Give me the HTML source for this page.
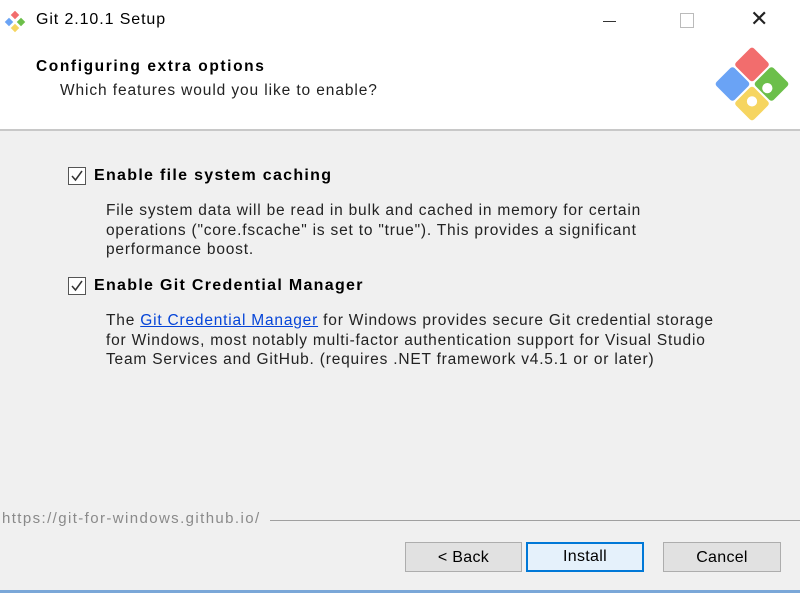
<!DOCTYPE html>
<html><head><style>
body{margin:0;width:800px;height:600px;overflow:hidden;background:#f0f0f0;font-family:"Liberation Sans",sans-serif;position:relative;color:#000}
.a{position:absolute}
.hdr{left:0;top:0;width:800px;height:130px;background:#fff}
.btn{position:absolute;top:542px;height:30px;background:#e1e1e1;border:1px solid #adadad;font-size:16px;text-align:center;line-height:30px;box-sizing:border-box;letter-spacing:0.3px}
.cb{position:absolute;width:18px;height:18px;border:1px solid #555;background:#fff;box-sizing:border-box}
.desc{font-size:15.5px;line-height:19.5px;color:#222;letter-spacing:0.8px}
.h{font-size:16px;font-weight:bold;letter-spacing:1.3px}
</style></head><body>
<div class="a hdr"></div>
<svg class="a" style="left:4px;top:11px" width="22" height="22" viewBox="0 0 22 22">
<rect x="8" y="1" width="6" height="6" fill="#f26d6d" transform="rotate(45 11 4)"/>
<rect x="2" y="8" width="6" height="6" fill="#6aa3f5" transform="rotate(45 5 11)"/>
<rect x="14" y="8" width="6" height="6" fill="#6cbf4a" transform="rotate(45 17 11)"/>
<rect x="8" y="14" width="6" height="6" fill="#f6d560" transform="rotate(45 11 17)"/>
</svg>
<div class="a" style="left:36px;top:11px;font-size:16px;letter-spacing:0.9px">Git 2.10.1 Setup</div>
<div class="a" style="left:603px;top:21px;width:13px;height:1px;background:#333"></div>
<div class="a" style="left:680px;top:13px;width:12px;height:13px;border:1px solid #bbb"></div>
<div class="a" style="left:750px;top:7px;font-size:22px;color:#222;font-family:'DejaVu Sans',sans-serif;font-weight:200">✕</div>
<div class="a" style="left:36px;top:58px;font-size:15.5px;font-weight:bold;letter-spacing:1.6px">Configuring extra options</div>
<div class="a" style="left:60px;top:82px;font-size:15.5px;color:#222;letter-spacing:0.9px">Which features would you like to enable?</div>
<svg class="a" style="left:706px;top:40px" width="92" height="88" viewBox="0 0 90 86">
<g transform="rotate(45 45 43)">
<rect x="19" y="17" width="25" height="25" rx="3" fill="#f26d6d"/>
<rect x="46" y="17" width="25" height="25" rx="3" fill="#6cbf4a"/>
<rect x="19" y="44" width="25" height="25" rx="3" fill="#6aa3f5"/>
<rect x="46" y="44" width="25" height="25" rx="3" fill="#f6d560"/>
</g>
<circle cx="60" cy="47" r="5" fill="#fff"/><circle cx="45" cy="60" r="5" fill="#fff"/>
</svg>
<div class="a" style="left:0;top:129px;width:800px;height:2px;background:#c8c8c8"></div>

<div class="cb" style="left:68px;top:167px"><svg width="16" height="16"><path d="M3 8 L6.5 12 L13 3" stroke="#333" stroke-width="1.5" fill="none"/></svg></div>
<div class="a h" style="left:94px;top:167px">Enable file system caching</div>
<div class="a desc" style="left:106px;top:201px">File system data will be read in bulk and cached in memory for certain<br>operations ("core.fscache" is set to "true"). This provides a significant<br>performance boost.</div>
<div class="cb" style="left:68px;top:277px"><svg width="16" height="16"><path d="M3 8 L6.5 12 L13 3" stroke="#333" stroke-width="1.5" fill="none"/></svg></div>
<div class="a h" style="left:94px;top:277px">Enable Git Credential Manager</div>
<div class="a desc" style="left:106px;top:311px;letter-spacing:0.8px">The <span style="color:#0645d8;text-decoration:underline">Git Credential Manager</span> for Windows provides secure Git credential storage<br>for Windows, most notably multi-factor authentication support for Visual Studio<br>Team Services and GitHub. (requires .NET framework v4.5.1 or or later)</div>

<div class="a" style="left:2px;top:510px;font-size:15px;color:#8a8a8a;letter-spacing:1.4px">https://git-for-windows.github.io/</div>
<div class="a" style="left:270px;top:520px;width:530px;height:1px;background:#a0a0a0"></div>
<div class="btn" style="left:405px;width:117px">&lt; Back</div>
<div class="btn" style="left:526px;width:118px;background:#e5f1fb;border:2px solid #0078d7;line-height:26px">Install</div>
<div class="btn" style="left:663px;width:118px">Cancel</div>
<div class="a" style="left:0;top:590px;width:800px;height:3px;background:#7aa7d8"></div>
<div class="a" style="left:0;top:593px;width:800px;height:7px;background:#fff"></div>
</body></html>
